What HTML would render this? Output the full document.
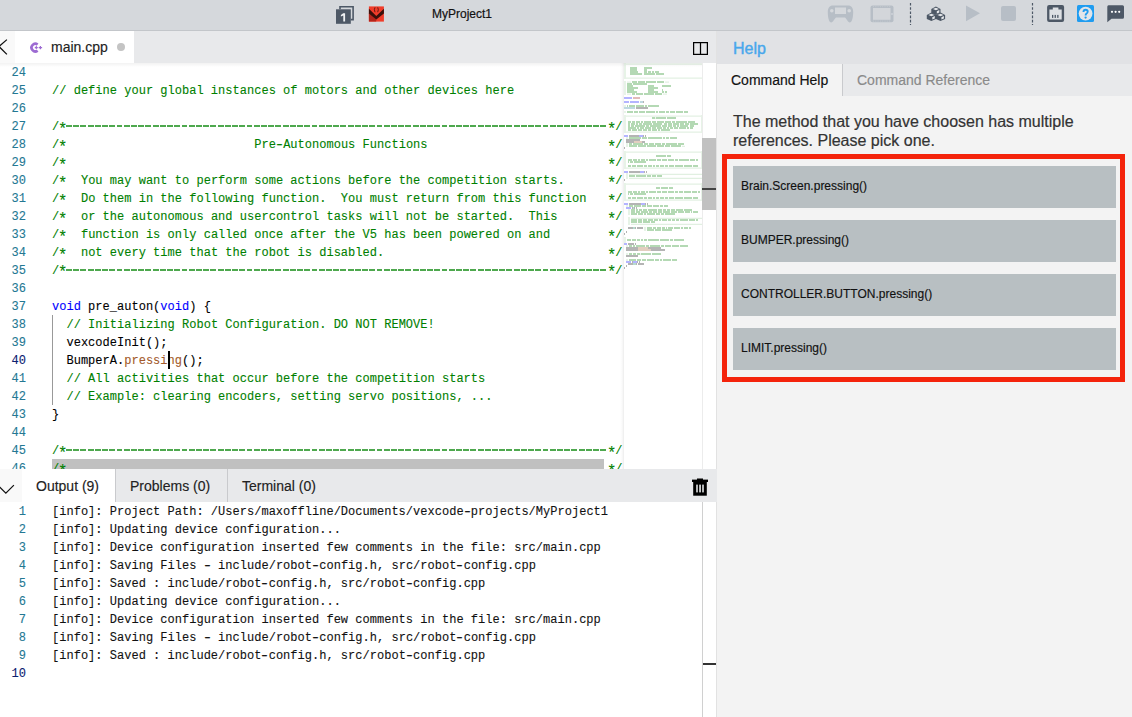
<!DOCTYPE html>
<html><head><meta charset="utf-8">
<style>
*{box-sizing:border-box}
html,body{margin:0;padding:0;width:1132px;height:717px;overflow:hidden;background:#fff;font-family:"Liberation Sans",sans-serif}
.abs{position:absolute}
#top{position:absolute;left:0;top:0;width:1132px;height:31px;background:#d5d8dc;border-bottom:1px solid #c3c6ca}
#title{position:absolute;left:432px;top:7px;font-size:12px;color:#111;letter-spacing:0;-webkit-text-stroke:0.2px #111}
#tabbar{position:absolute;left:0;top:31px;width:716px;height:32px;background:#e8e9eb}
#back{position:absolute;left:0;top:0;width:15px;height:32px;background:#f9f9f9}
#tab{position:absolute;left:15px;top:0;width:119px;height:32px;background:#fff}
#tab .t{position:absolute;left:36px;top:8px;font-size:14px;color:#222;-webkit-text-stroke:0.15px #222}
#tab .dot{position:absolute;left:102px;top:12px;width:8px;height:8px;border-radius:50%;background:#c4c4c4}
#editor{position:absolute;left:0;top:63px;width:716px;height:406px;background:#fff;overflow:hidden}
#edshadow{position:absolute;left:0;top:63px;width:702px;height:4px;background:linear-gradient(rgba(0,0,0,0.05),rgba(0,0,0,0));z-index:1}
.ln,.cl,.oln,.ocl{-webkit-text-stroke:0.1px currentColor;position:absolute;height:18px;line-height:18px;font-family:"Liberation Mono",monospace;font-size:12px;white-space:pre}
.ln{left:0;width:26px;text-align:right;color:#237893}
.ln.cur,.oln.cur{color:#0b216f}
.cl{left:52px;color:#000;letter-spacing:0.02px}
#ed-lines{position:absolute;left:0;top:-63px;width:716px;height:469px}
.ast{font-style:normal;display:inline-block;transform:translateY(2.6px) scale(1.3)}
.hy{font-style:normal;display:inline-block;transform:scaleX(1.45)}
.dash{position:absolute;height:1.6px;background:repeating-linear-gradient(to right,#4ea84e 0 5.9px,transparent 5.9px 7.2212px)}
.oln{left:0;width:26px;text-align:right;color:#237893}
.ocl{left:52px;color:#111;letter-spacing:0.02px}
#panelhdr{position:absolute;left:0;top:469px;width:717px;z-index:2;height:33px;background:#e8e9eb}
#collapse{position:absolute;left:0;top:0;width:22px;height:33px;background:#f9f9f9}
.ptab{position:absolute;top:0;height:33px;font-size:14px;color:#222;line-height:35px;-webkit-text-stroke:0.15px #222}
#output{position:absolute;left:0;top:502px;width:716px;height:215px;background:#fff;overflow:hidden}
#help{position:absolute;left:716px;top:31px;width:416px;height:686px;background:#f3f3f3;border-left:1px solid #e2e2e2}
#helphdr{position:absolute;left:0;top:0;width:415px;height:33px;background:#e1e2e5}
#helphdr .t{position:absolute;left:16px;top:9px;font-size:16px;color:#48a7ec;-webkit-text-stroke:0.4px #48a7ec}
#ctabs{position:absolute;left:0;top:33px;width:415px;height:32px}
.ctab{position:absolute;top:0;height:32px;line-height:32px;font-size:14px;-webkit-text-stroke:0.15px currentColor}
#msg{position:absolute;left:16px;top:81px;width:390px;font-size:16px;line-height:19px;color:#333;-webkit-text-stroke:0.2px #333}
#redbox{position:absolute;left:5px;top:123px;width:403px;height:228px;border:5px solid #f4230b}
.btn{position:absolute;left:6px;width:383px;height:42px;background:#b8bfc2;font-size:12px;color:#111;line-height:41px;padding-left:8px;-webkit-text-stroke:0.15px #111}
</style></head><body>
<div id="top">
  <svg class="abs" style="left:335px;top:5px" width="20" height="20" viewBox="0 0 20 20">
    <path d="M4.2 0.9 H18.9 V15.4 H15.8 V13.8 H17.3 V2.5 H5.8 V4.3 H4.2 Z" fill="#4d5866"/>
    <rect x="1" y="4.3" width="14.8" height="14.5" fill="#4d5866"/>
    <path d="M8.2 8.3 H10.1 V16.6 H8.3 V10.6 L5.9 11.6 V10 Z" fill="#f0f2f4"/>
  </svg>
  <svg class="abs" style="left:368px;top:6px" width="17" height="16" viewBox="0 0 17 16">
    <rect x="0.9" y="0.4" width="15" height="15.2" fill="#f03c2a"/>
    <path d="M0.9 6.9 L8.2 12.8 L8.2 15.6 L0.9 15.6 Z" fill="#b3241b"/>
    <path d="M0.9 2.7 L8.3 10.1 L15.9 2.7 V7.4 L8.3 13.6 L0.9 7.4 Z" fill="#3a0f0a"/>
    <path d="M7 1.4 Q5.7 3.6 7 6.2 M9.7 1.4 Q11 3.6 9.7 6.2" stroke="#5a140d" stroke-width="0.9" fill="none"/>
  </svg>
  <div id="title">MyProject1</div>
  <!-- controller -->
  <svg class="abs" style="left:827px;top:5px" width="27" height="18" viewBox="0 0 27 18">
    <path d="M6 0.5 H21 C24.5 0.5 26.2 3 26.2 7 C26.2 11 25.5 17 23 17.5 C21 17.8 19.5 13.5 18 12.5 H9 C7.5 13.5 6 17.8 4 17.5 C1.5 17 0.8 11 0.8 7 C0.8 3 2.5 0.5 6 0.5 Z" fill="#b7bec6"/>
    <rect x="8" y="2.5" width="11" height="6.5" fill="#d5d8dc"/>
    <circle cx="4.8" cy="5.8" r="1.8" fill="#d5d8dc"/>
    <circle cx="22.2" cy="5.8" r="1.8" fill="#d5d8dc"/>
  </svg>
  <!-- brain screen -->
  <svg class="abs" style="left:870px;top:5px" width="24" height="18" viewBox="0 0 24 18">
    <rect x="0.5" y="0.5" width="23" height="16.8" rx="2" fill="#b7bec6"/>
    <rect x="3" y="3" width="17.5" height="11.8" fill="#d3d6da"/>
    <circle cx="22" cy="9" r="0.8" fill="#e0e2e5"/>
    <path d="M3 1.7 H21 M3 16.1 H21" stroke="#cfd3d7" stroke-width="0.6" stroke-dasharray="1 1.3"/>
  </svg>
  <svg class="abs" style="left:909px;top:3px" width="3" height="22"><path d="M1.5 0 V22" stroke="#4d5866" stroke-width="1.2" stroke-dasharray="2.6 1.6"/></svg>
  <!-- cubes -->
  <svg class="abs" style="left:926px;top:6px" width="20" height="16" viewBox="0 0 20 16"><path d="M5.30 2.90 L9.90 0.60 L14.50 2.90 L14.50 6.90 L9.90 9.00 L5.30 6.90 Z" fill="#4d5866"/><path d="M6.90 2.90 L9.90 1.70 L12.90 2.90 L9.90 4.20 Z" fill="#e6e8eb"/><path d="M10.80 5.20 L13.30 4.10 L13.30 6.40 L10.80 7.60 Z" fill="#e6e8eb"/><path d="M0.80 8.90 L5.40 6.60 L10.00 8.90 L10.00 12.90 L5.40 15.00 L0.80 12.90 Z" fill="#4d5866"/><path d="M2.40 8.90 L5.40 7.70 L8.40 8.90 L5.40 10.20 Z" fill="#e6e8eb"/><path d="M6.30 11.20 L8.80 10.10 L8.80 12.40 L6.30 13.60 Z" fill="#e6e8eb"/><path d="M9.90 8.90 L14.50 6.60 L19.10 8.90 L19.10 12.90 L14.50 15.00 L9.90 12.90 Z" fill="#4d5866"/><path d="M11.50 8.90 L14.50 7.70 L17.50 8.90 L14.50 10.20 Z" fill="#e6e8eb"/><path d="M15.40 11.20 L17.90 10.10 L17.90 12.40 L15.40 13.60 Z" fill="#e6e8eb"/></svg>
  <!-- play -->
  <svg class="abs" style="left:965px;top:5px" width="16" height="17" viewBox="0 0 16 17"><path d="M1 0.5 L15 8.3 L1 16.3 Z" fill="#b7bec6"/></svg>
  <!-- stop -->
  <div class="abs" style="left:1001px;top:6px;width:15px;height:15px;border-radius:2px;background:#b7bec6"></div>
  <svg class="abs" style="left:1031px;top:3px" width="3" height="22"><path d="M1.5 0 V22" stroke="#4d5866" stroke-width="1.2" stroke-dasharray="2.6 1.6"/></svg>
  <!-- port/serial -->
  <svg class="abs" style="left:1047px;top:5px" width="18" height="17" viewBox="0 0 18 17">
    <rect x="0.1" y="0" width="17" height="17" rx="2" fill="#4d5866"/>
    <path d="M2.4 4.4 H5.8 V2.6 H11.4 V4.4 H14.7 V14.6 H2.4 Z" fill="#dde0e4"/>
    <rect x="5" y="9.9" width="1.3" height="3" fill="#4d5866"/>
    <rect x="7.6" y="9.9" width="1.3" height="3" fill="#4d5866"/>
    <rect x="10.2" y="9.9" width="1.3" height="3" fill="#4d5866"/>
  </svg>
  <!-- help -->
  <svg class="abs" style="left:1077px;top:5px" width="17" height="17" viewBox="0 0 17 17">
    <rect x="0" y="0" width="17" height="17" rx="1.5" fill="#1f9cf0"/>
    <circle cx="8.6" cy="8.6" r="6.9" fill="#e1e5ea"/>
    <path d="M6.5 7 Q6.5 4.7 8.6 4.7 Q10.7 4.7 10.7 6.6 Q10.7 7.9 9.6 8.5 Q8.6 9 8.6 10.5" stroke="#1f9cf0" stroke-width="1.9" fill="none"/>
    <circle cx="8.6" cy="12.6" r="1.15" fill="#1f9cf0"/>
  </svg>
  <!-- chat -->
  <svg class="abs" style="left:1107px;top:5px" width="17" height="18" viewBox="0 0 17 18">
    <path d="M1.5 0.2 H15.5 Q17 0.2 17 1.7 V12.2 Q17 13.7 15.5 13.7 H4.5 L0.3 17.2 V1.7 Q0.3 0.2 1.5 0.2 Z" fill="#4d5866"/>
    <circle cx="5" cy="6.8" r="1.1" fill="#fff"/><circle cx="8.6" cy="6.8" r="1.1" fill="#fff"/><circle cx="12.2" cy="6.8" r="1.1" fill="#fff"/>
  </svg>
</div>

<div id="tabbar">
  <div id="back"><svg class="abs" style="left:0;top:8px" width="10" height="17" viewBox="0 0 10 17"><path d="M6.9 0.6 L-1 7.5 L6.9 15.4" stroke="#111" stroke-width="1.25" fill="none"/></svg></div>
  <div id="tab">
    <svg class="abs" style="left:14px;top:10px" width="15" height="14" viewBox="0 0 15 14">
      <path d="M8.61 3.64 A3.75 3.75 0 1 0 8.61 9.56" stroke="#9d6bd2" stroke-width="2.7" fill="none"/>
      <path d="M5.8 6.6 H8.8 M7.3 5.1 V8.1" stroke="#9d6bd2" stroke-width="1.1"/>
      <path d="M9.7 6.6 H13.1 M11.4 4.9 V8.3" stroke="#9d6bd2" stroke-width="1.2"/>
    </svg>
    <div class="t">main.cpp</div>
    <div class="dot"></div>
  </div>
  <svg class="abs" style="left:693px;top:11px" width="15" height="13" viewBox="0 0 15 13"><rect x="0.6" y="0.6" width="13.8" height="11.8" fill="none" stroke="#000" stroke-width="1.25"/><path d="M7.5 0.6 V12.4" stroke="#000" stroke-width="1.25"/></svg>
</div>

<div id="editor"><div id="ed-lines">
  <div class="abs" style="left:52px;top:459px;width:552px;height:18px;background:#c0c0c0"></div>
  <div class="abs" style="left:52px;top:315px;width:1px;height:90px;background:#999"></div>
  <div class="ln" style="top:64px">24</div><div class="cl" style="top:64px"></div><div class="ln" style="top:82px">25</div><div class="cl" style="top:82px"><span style="color:#008000">// define your global instances of motors and other devices here</span></div><div class="ln" style="top:100px">26</div><div class="cl" style="top:100px"></div><div class="ln" style="top:118px">27</div><div class="cl" style="top:118px"><span style="color:#008000">/<i class="ast">*</i>                                                                           <i class="ast">*</i>/</span></div><div class="dash" style="left:66.44px;top:125px;width:541.59px"></div><div class="ln" style="top:136px">28</div><div class="cl" style="top:136px"><span style="color:#008000">/<i class="ast">*</i>                          Pre<i class="hy">-</i>Autonomous Functions                         <i class="ast">*</i>/</span></div><div class="ln" style="top:154px">29</div><div class="cl" style="top:154px"><span style="color:#008000">/<i class="ast">*</i>                                                                           <i class="ast">*</i>/</span></div><div class="ln" style="top:172px">30</div><div class="cl" style="top:172px"><span style="color:#008000">/<i class="ast">*</i>  You may want to perform some actions before the competition starts.      <i class="ast">*</i>/</span></div><div class="ln" style="top:190px">31</div><div class="cl" style="top:190px"><span style="color:#008000">/<i class="ast">*</i>  Do them in the following function.  You must return from this function   <i class="ast">*</i>/</span></div><div class="ln" style="top:208px">32</div><div class="cl" style="top:208px"><span style="color:#008000">/<i class="ast">*</i>  or the autonomous and usercontrol tasks will not be started.  This       <i class="ast">*</i>/</span></div><div class="ln" style="top:226px">33</div><div class="cl" style="top:226px"><span style="color:#008000">/<i class="ast">*</i>  function is only called once after the V5 has been powered on and        <i class="ast">*</i>/</span></div><div class="ln" style="top:244px">34</div><div class="cl" style="top:244px"><span style="color:#008000">/<i class="ast">*</i>  not every time that the robot is disabled.                               <i class="ast">*</i>/</span></div><div class="ln" style="top:262px">35</div><div class="cl" style="top:262px"><span style="color:#008000">/<i class="ast">*</i>                                                                           <i class="ast">*</i>/</span></div><div class="dash" style="left:66.44px;top:269px;width:541.59px"></div><div class="ln" style="top:280px">36</div><div class="cl" style="top:280px"></div><div class="ln" style="top:298px">37</div><div class="cl" style="top:298px"><span style="color:#0000ff">void</span> pre_auton(<span style="color:#0000ff">void</span>) {</div><div class="ln" style="top:316px">38</div><div class="cl" style="top:316px">  <span style="color:#008000">// Initializing Robot Configuration. DO NOT REMOVE!</span></div><div class="ln" style="top:334px">39</div><div class="cl" style="top:334px">  vexcodeInit();</div><div class="ln cur" style="top:352px">40</div><div class="cl" style="top:352px">  BumperA.<span style="color:#a35a2a">pressing</span>();</div><div class="ln" style="top:370px">41</div><div class="cl" style="top:370px">  <span style="color:#008000">// All activities that occur before the competition starts</span></div><div class="ln" style="top:388px">42</div><div class="cl" style="top:388px">  <span style="color:#008000">// Example: clearing encoders, setting servo positions, ...</span></div><div class="ln" style="top:406px">43</div><div class="cl" style="top:406px">}</div><div class="ln" style="top:424px">44</div><div class="cl" style="top:424px"></div><div class="ln" style="top:442px">45</div><div class="cl" style="top:442px"><span style="color:#008000">/<i class="ast">*</i>                                                                           <i class="ast">*</i>/</span></div><div class="dash" style="left:66.44px;top:449px;width:541.59px"></div><div class="ln" style="top:460px">46</div><div class="cl" style="top:460px"><span style="color:#008000">/<i class="ast">*</i>                                                                           <i class="ast">*</i>/</span></div>
  <div class="abs" style="left:168px;top:351px;width:2px;height:18px;background:#000"></div>
  <div class="abs" style="left:620px;top:63px;width:4px;height:406px;background:linear-gradient(to right,rgba(0,0,0,0),rgba(0,0,0,0.02) 50%,rgba(0,0,0,0.075))"></div>
  <svg width="78" height="210" style="position:absolute;left:624px;top:63px"><rect x="0" y="0.4" width="2" height="1.2" fill="#008000" fill-opacity="0.16"/><rect x="2" y="0.6" width="76" height="1" fill="#008000" fill-opacity="0.14"/><rect x="78" y="0.4" width="2" height="1.2" fill="#008000" fill-opacity="0.16"/><rect x="0" y="2.4" width="2" height="1.2" fill="#008000" fill-opacity="0.16"/><rect x="78" y="2.4" width="2" height="1.2" fill="#008000" fill-opacity="0.16"/><rect x="0" y="4.4" width="2" height="1.2" fill="#008000" fill-opacity="0.16"/><rect x="6" y="4.3" width="7" height="1.4" fill="#008000" fill-opacity="0.42"/><rect x="20" y="4.3" width="4" height="1.4" fill="#008000" fill-opacity="0.42"/><rect x="24" y="4.3" width="1" height="1.4" fill="#008000" fill-opacity="0.42"/><rect x="25" y="4.3" width="3" height="1.4" fill="#008000" fill-opacity="0.42"/><rect x="78" y="4.4" width="2" height="1.2" fill="#008000" fill-opacity="0.16"/><rect x="0" y="6.4" width="2" height="1.2" fill="#008000" fill-opacity="0.16"/><rect x="6" y="6.3" width="7" height="1.4" fill="#008000" fill-opacity="0.42"/><rect x="20" y="6.3" width="3" height="1.4" fill="#008000" fill-opacity="0.42"/><rect x="78" y="6.4" width="2" height="1.2" fill="#008000" fill-opacity="0.16"/><rect x="0" y="8.4" width="2" height="1.2" fill="#008000" fill-opacity="0.16"/><rect x="6" y="8.3" width="8" height="1.4" fill="#008000" fill-opacity="0.42"/><rect x="20" y="8.3" width="3" height="1.4" fill="#008000" fill-opacity="0.42"/><rect x="24" y="8.3" width="3" height="1.4" fill="#008000" fill-opacity="0.42"/><rect x="28" y="8.3" width="2" height="1.4" fill="#008000" fill-opacity="0.42"/><rect x="31" y="8.3" width="4" height="1.4" fill="#008000" fill-opacity="0.42"/><rect x="78" y="8.4" width="2" height="1.2" fill="#008000" fill-opacity="0.16"/><rect x="0" y="10.4" width="2" height="1.2" fill="#008000" fill-opacity="0.16"/><rect x="6" y="10.3" width="12" height="1.4" fill="#008000" fill-opacity="0.42"/><rect x="20" y="10.3" width="11" height="1.4" fill="#008000" fill-opacity="0.42"/><rect x="32" y="10.3" width="8" height="1.4" fill="#008000" fill-opacity="0.42"/><rect x="78" y="10.4" width="2" height="1.2" fill="#008000" fill-opacity="0.16"/><rect x="0" y="12.4" width="2" height="1.2" fill="#008000" fill-opacity="0.16"/><rect x="78" y="12.4" width="2" height="1.2" fill="#008000" fill-opacity="0.16"/><rect x="0" y="14.4" width="2" height="1.2" fill="#008000" fill-opacity="0.16"/><rect x="2" y="14.6" width="76" height="1" fill="#008000" fill-opacity="0.14"/><rect x="78" y="14.4" width="2" height="1.2" fill="#008000" fill-opacity="0.16"/><rect x="0" y="18.4" width="2" height="1.2" fill="#008000" fill-opacity="0.16"/><rect x="3" y="18.6" width="4" height="1" fill="#008000" fill-opacity="0.14"/><rect x="8" y="18.3" width="5" height="1.4" fill="#008000" fill-opacity="0.42"/><rect x="14" y="18.3" width="7" height="1.4" fill="#008000" fill-opacity="0.42"/><rect x="22" y="18.3" width="10" height="1.4" fill="#008000" fill-opacity="0.42"/><rect x="33" y="18.3" width="7" height="1.4" fill="#008000" fill-opacity="0.42"/><rect x="41" y="18.6" width="4" height="1" fill="#008000" fill-opacity="0.14"/><rect x="0" y="20.4" width="2" height="1.2" fill="#008000" fill-opacity="0.16"/><rect x="3" y="20.3" width="5" height="1.4" fill="#008000" fill-opacity="0.42"/><rect x="9" y="20.3" width="14" height="1.4" fill="#008000" fill-opacity="0.42"/><rect x="0" y="22.4" width="2" height="1.2" fill="#008000" fill-opacity="0.16"/><rect x="3" y="22.3" width="6" height="1.4" fill="#008000" fill-opacity="0.42"/><rect x="24" y="22.3" width="6" height="1.4" fill="#008000" fill-opacity="0.42"/><rect x="38" y="22.3" width="9" height="1.4" fill="#008000" fill-opacity="0.42"/><rect x="0" y="24.4" width="2" height="1.2" fill="#008000" fill-opacity="0.16"/><rect x="3" y="24.3" width="11" height="1.4" fill="#008000" fill-opacity="0.42"/><rect x="24" y="24.3" width="10" height="1.4" fill="#008000" fill-opacity="0.42"/><rect x="0" y="26.4" width="2" height="1.2" fill="#008000" fill-opacity="0.16"/><rect x="3" y="26.3" width="7" height="1.4" fill="#008000" fill-opacity="0.42"/><rect x="24" y="26.3" width="6" height="1.4" fill="#008000" fill-opacity="0.42"/><rect x="38" y="26.3" width="1" height="1.4" fill="#008000" fill-opacity="0.42"/><rect x="0" y="28.4" width="2" height="1.2" fill="#008000" fill-opacity="0.16"/><rect x="3" y="28.3" width="10" height="1.4" fill="#008000" fill-opacity="0.42"/><rect x="24" y="28.3" width="10" height="1.4" fill="#008000" fill-opacity="0.42"/><rect x="38" y="28.3" width="2" height="1.4" fill="#008000" fill-opacity="0.42"/><rect x="41" y="28.3" width="2" height="1.4" fill="#008000" fill-opacity="0.42"/><rect x="0" y="30.4" width="2" height="1.2" fill="#008000" fill-opacity="0.16"/><rect x="3" y="30.6" width="4" height="1" fill="#008000" fill-opacity="0.14"/><rect x="8" y="30.3" width="3" height="1.4" fill="#008000" fill-opacity="0.42"/><rect x="12" y="30.3" width="7" height="1.4" fill="#008000" fill-opacity="0.42"/><rect x="20" y="30.3" width="10" height="1.4" fill="#008000" fill-opacity="0.42"/><rect x="31" y="30.3" width="7" height="1.4" fill="#008000" fill-opacity="0.42"/><rect x="39" y="30.6" width="4" height="1" fill="#008000" fill-opacity="0.14"/><rect x="0" y="34.3" width="8" height="1.4" fill="#0000ff" fill-opacity="0.42"/><rect x="9" y="34.3" width="4" height="1.4" fill="#a31515" fill-opacity="0.42"/><rect x="13" y="34.3" width="1" height="1.4" fill="#a31515" fill-opacity="0.42"/><rect x="14" y="34.3" width="2" height="1.4" fill="#a31515" fill-opacity="0.42"/><rect x="0" y="38.3" width="5" height="1.4" fill="#0000ff" fill-opacity="0.42"/><rect x="6" y="38.3" width="9" height="1.4" fill="#0000ff" fill-opacity="0.42"/><rect x="16" y="38.3" width="3" height="1.4" fill="#267f99" fill-opacity="0.42"/><rect x="19" y="38.3" width="1" height="1.4" fill="#000000" fill-opacity="0.42"/><rect x="0" y="42.4" width="2" height="1.2" fill="#008000" fill-opacity="0.16"/><rect x="3" y="42.3" width="1" height="1.4" fill="#008000" fill-opacity="0.42"/><rect x="5" y="42.3" width="6" height="1.4" fill="#008000" fill-opacity="0.42"/><rect x="12" y="42.3" width="8" height="1.4" fill="#008000" fill-opacity="0.42"/><rect x="21" y="42.3" width="2" height="1.4" fill="#008000" fill-opacity="0.42"/><rect x="24" y="42.3" width="11" height="1.4" fill="#008000" fill-opacity="0.42"/><rect x="0" y="44.3" width="11" height="1.4" fill="#267f99" fill-opacity="0.42"/><rect x="12" y="44.3" width="11" height="1.4" fill="#000000" fill-opacity="0.42"/><rect x="23" y="44.3" width="1" height="1.4" fill="#000000" fill-opacity="0.42"/><rect x="0" y="48.4" width="2" height="1.2" fill="#008000" fill-opacity="0.16"/><rect x="3" y="48.3" width="6" height="1.4" fill="#008000" fill-opacity="0.42"/><rect x="10" y="48.3" width="4" height="1.4" fill="#008000" fill-opacity="0.42"/><rect x="15" y="48.3" width="6" height="1.4" fill="#008000" fill-opacity="0.42"/><rect x="22" y="48.3" width="9" height="1.4" fill="#008000" fill-opacity="0.42"/><rect x="32" y="48.3" width="2" height="1.4" fill="#008000" fill-opacity="0.42"/><rect x="35" y="48.3" width="6" height="1.4" fill="#008000" fill-opacity="0.42"/><rect x="42" y="48.3" width="3" height="1.4" fill="#008000" fill-opacity="0.42"/><rect x="46" y="48.3" width="5" height="1.4" fill="#008000" fill-opacity="0.42"/><rect x="52" y="48.3" width="7" height="1.4" fill="#008000" fill-opacity="0.42"/><rect x="60" y="48.3" width="4" height="1.4" fill="#008000" fill-opacity="0.42"/><rect x="0" y="52.4" width="2" height="1.2" fill="#008000" fill-opacity="0.16"/><rect x="2" y="52.6" width="75" height="1" fill="#008000" fill-opacity="0.14"/><rect x="77" y="52.4" width="2" height="1.2" fill="#008000" fill-opacity="0.16"/><rect x="0" y="54.4" width="2" height="1.2" fill="#008000" fill-opacity="0.16"/><rect x="28" y="54.3" width="3" height="1.4" fill="#008000" fill-opacity="0.42"/><rect x="31" y="54.6" width="1" height="1" fill="#008000" fill-opacity="0.14"/><rect x="32" y="54.3" width="10" height="1.4" fill="#008000" fill-opacity="0.42"/><rect x="43" y="54.3" width="9" height="1.4" fill="#008000" fill-opacity="0.42"/><rect x="77" y="54.4" width="2" height="1.2" fill="#008000" fill-opacity="0.16"/><rect x="0" y="56.4" width="2" height="1.2" fill="#008000" fill-opacity="0.16"/><rect x="77" y="56.4" width="2" height="1.2" fill="#008000" fill-opacity="0.16"/><rect x="0" y="58.4" width="2" height="1.2" fill="#008000" fill-opacity="0.16"/><rect x="4" y="58.3" width="3" height="1.4" fill="#008000" fill-opacity="0.42"/><rect x="8" y="58.3" width="3" height="1.4" fill="#008000" fill-opacity="0.42"/><rect x="12" y="58.3" width="4" height="1.4" fill="#008000" fill-opacity="0.42"/><rect x="17" y="58.3" width="2" height="1.4" fill="#008000" fill-opacity="0.42"/><rect x="20" y="58.3" width="7" height="1.4" fill="#008000" fill-opacity="0.42"/><rect x="28" y="58.3" width="4" height="1.4" fill="#008000" fill-opacity="0.42"/><rect x="33" y="58.3" width="7" height="1.4" fill="#008000" fill-opacity="0.42"/><rect x="41" y="58.3" width="6" height="1.4" fill="#008000" fill-opacity="0.42"/><rect x="48" y="58.3" width="3" height="1.4" fill="#008000" fill-opacity="0.42"/><rect x="52" y="58.3" width="11" height="1.4" fill="#008000" fill-opacity="0.42"/><rect x="64" y="58.3" width="6" height="1.4" fill="#008000" fill-opacity="0.42"/><rect x="70" y="58.3" width="1" height="1.4" fill="#008000" fill-opacity="0.42"/><rect x="77" y="58.4" width="2" height="1.2" fill="#008000" fill-opacity="0.16"/><rect x="0" y="60.4" width="2" height="1.2" fill="#008000" fill-opacity="0.16"/><rect x="4" y="60.3" width="2" height="1.4" fill="#008000" fill-opacity="0.42"/><rect x="7" y="60.3" width="4" height="1.4" fill="#008000" fill-opacity="0.42"/><rect x="12" y="60.3" width="2" height="1.4" fill="#008000" fill-opacity="0.42"/><rect x="15" y="60.3" width="3" height="1.4" fill="#008000" fill-opacity="0.42"/><rect x="19" y="60.3" width="9" height="1.4" fill="#008000" fill-opacity="0.42"/><rect x="29" y="60.3" width="8" height="1.4" fill="#008000" fill-opacity="0.42"/><rect x="37" y="60.3" width="1" height="1.4" fill="#008000" fill-opacity="0.42"/><rect x="40" y="60.3" width="3" height="1.4" fill="#008000" fill-opacity="0.42"/><rect x="44" y="60.3" width="4" height="1.4" fill="#008000" fill-opacity="0.42"/><rect x="49" y="60.3" width="6" height="1.4" fill="#008000" fill-opacity="0.42"/><rect x="56" y="60.3" width="4" height="1.4" fill="#008000" fill-opacity="0.42"/><rect x="61" y="60.3" width="4" height="1.4" fill="#008000" fill-opacity="0.42"/><rect x="66" y="60.3" width="8" height="1.4" fill="#008000" fill-opacity="0.42"/><rect x="77" y="60.4" width="2" height="1.2" fill="#008000" fill-opacity="0.16"/><rect x="0" y="62.4" width="2" height="1.2" fill="#008000" fill-opacity="0.16"/><rect x="4" y="62.3" width="2" height="1.4" fill="#008000" fill-opacity="0.42"/><rect x="7" y="62.3" width="3" height="1.4" fill="#008000" fill-opacity="0.42"/><rect x="11" y="62.3" width="10" height="1.4" fill="#008000" fill-opacity="0.42"/><rect x="22" y="62.3" width="3" height="1.4" fill="#008000" fill-opacity="0.42"/><rect x="26" y="62.3" width="11" height="1.4" fill="#008000" fill-opacity="0.42"/><rect x="38" y="62.3" width="5" height="1.4" fill="#008000" fill-opacity="0.42"/><rect x="44" y="62.3" width="4" height="1.4" fill="#008000" fill-opacity="0.42"/><rect x="49" y="62.3" width="3" height="1.4" fill="#008000" fill-opacity="0.42"/><rect x="53" y="62.3" width="2" height="1.4" fill="#008000" fill-opacity="0.42"/><rect x="56" y="62.3" width="7" height="1.4" fill="#008000" fill-opacity="0.42"/><rect x="63" y="62.3" width="1" height="1.4" fill="#008000" fill-opacity="0.42"/><rect x="66" y="62.3" width="4" height="1.4" fill="#008000" fill-opacity="0.42"/><rect x="77" y="62.4" width="2" height="1.2" fill="#008000" fill-opacity="0.16"/><rect x="0" y="64.4" width="2" height="1.2" fill="#008000" fill-opacity="0.16"/><rect x="4" y="64.3" width="8" height="1.4" fill="#008000" fill-opacity="0.42"/><rect x="13" y="64.3" width="2" height="1.4" fill="#008000" fill-opacity="0.42"/><rect x="16" y="64.3" width="4" height="1.4" fill="#008000" fill-opacity="0.42"/><rect x="21" y="64.3" width="6" height="1.4" fill="#008000" fill-opacity="0.42"/><rect x="28" y="64.3" width="4" height="1.4" fill="#008000" fill-opacity="0.42"/><rect x="33" y="64.3" width="5" height="1.4" fill="#008000" fill-opacity="0.42"/><rect x="39" y="64.3" width="3" height="1.4" fill="#008000" fill-opacity="0.42"/><rect x="43" y="64.3" width="2" height="1.4" fill="#008000" fill-opacity="0.42"/><rect x="46" y="64.3" width="3" height="1.4" fill="#008000" fill-opacity="0.42"/><rect x="50" y="64.3" width="4" height="1.4" fill="#008000" fill-opacity="0.42"/><rect x="55" y="64.3" width="7" height="1.4" fill="#008000" fill-opacity="0.42"/><rect x="63" y="64.3" width="2" height="1.4" fill="#008000" fill-opacity="0.42"/><rect x="66" y="64.3" width="3" height="1.4" fill="#008000" fill-opacity="0.42"/><rect x="77" y="64.4" width="2" height="1.2" fill="#008000" fill-opacity="0.16"/><rect x="0" y="66.4" width="2" height="1.2" fill="#008000" fill-opacity="0.16"/><rect x="4" y="66.3" width="3" height="1.4" fill="#008000" fill-opacity="0.42"/><rect x="8" y="66.3" width="5" height="1.4" fill="#008000" fill-opacity="0.42"/><rect x="14" y="66.3" width="4" height="1.4" fill="#008000" fill-opacity="0.42"/><rect x="19" y="66.3" width="4" height="1.4" fill="#008000" fill-opacity="0.42"/><rect x="24" y="66.3" width="3" height="1.4" fill="#008000" fill-opacity="0.42"/><rect x="28" y="66.3" width="5" height="1.4" fill="#008000" fill-opacity="0.42"/><rect x="34" y="66.3" width="2" height="1.4" fill="#008000" fill-opacity="0.42"/><rect x="37" y="66.3" width="8" height="1.4" fill="#008000" fill-opacity="0.42"/><rect x="45" y="66.3" width="1" height="1.4" fill="#008000" fill-opacity="0.42"/><rect x="77" y="66.4" width="2" height="1.2" fill="#008000" fill-opacity="0.16"/><rect x="0" y="68.4" width="2" height="1.2" fill="#008000" fill-opacity="0.16"/><rect x="2" y="68.6" width="75" height="1" fill="#008000" fill-opacity="0.14"/><rect x="77" y="68.4" width="2" height="1.2" fill="#008000" fill-opacity="0.16"/><rect x="0" y="72.3" width="4" height="1.4" fill="#0000ff" fill-opacity="0.42"/><rect x="5" y="72.3" width="9" height="1.4" fill="#000000" fill-opacity="0.42"/><rect x="14" y="72.3" width="1" height="1.4" fill="#000000" fill-opacity="0.42"/><rect x="15" y="72.3" width="4" height="1.4" fill="#0000ff" fill-opacity="0.42"/><rect x="19" y="72.3" width="1" height="1.4" fill="#000000" fill-opacity="0.42"/><rect x="21" y="72.3" width="1" height="1.4" fill="#000000" fill-opacity="0.42"/><rect x="2" y="74.4" width="2" height="1.2" fill="#008000" fill-opacity="0.16"/><rect x="5" y="74.3" width="12" height="1.4" fill="#008000" fill-opacity="0.42"/><rect x="18" y="74.3" width="5" height="1.4" fill="#008000" fill-opacity="0.42"/><rect x="24" y="74.3" width="13" height="1.4" fill="#008000" fill-opacity="0.42"/><rect x="37" y="74.3" width="1" height="1.4" fill="#008000" fill-opacity="0.42"/><rect x="39" y="74.3" width="2" height="1.4" fill="#008000" fill-opacity="0.42"/><rect x="42" y="74.3" width="3" height="1.4" fill="#008000" fill-opacity="0.42"/><rect x="46" y="74.3" width="7" height="1.4" fill="#008000" fill-opacity="0.42"/><rect x="2" y="76.3" width="11" height="1.4" fill="#000000" fill-opacity="0.42"/><rect x="13" y="76.3" width="1" height="1.4" fill="#000000" fill-opacity="0.42"/><rect x="14" y="76.3" width="1" height="1.4" fill="#000000" fill-opacity="0.42"/><rect x="15" y="76.3" width="1" height="1.4" fill="#000000" fill-opacity="0.42"/><rect x="2" y="78.3" width="7" height="1.4" fill="#000000" fill-opacity="0.42"/><rect x="9" y="78.3" width="1" height="1.4" fill="#000000" fill-opacity="0.42"/><rect x="10" y="78.3" width="8" height="1.4" fill="#a35a2a" fill-opacity="0.42"/><rect x="18" y="78.3" width="1" height="1.4" fill="#000000" fill-opacity="0.42"/><rect x="19" y="78.3" width="1" height="1.4" fill="#000000" fill-opacity="0.42"/><rect x="20" y="78.3" width="1" height="1.4" fill="#000000" fill-opacity="0.42"/><rect x="2" y="80.4" width="2" height="1.2" fill="#008000" fill-opacity="0.16"/><rect x="5" y="80.3" width="3" height="1.4" fill="#008000" fill-opacity="0.42"/><rect x="9" y="80.3" width="10" height="1.4" fill="#008000" fill-opacity="0.42"/><rect x="20" y="80.3" width="4" height="1.4" fill="#008000" fill-opacity="0.42"/><rect x="25" y="80.3" width="5" height="1.4" fill="#008000" fill-opacity="0.42"/><rect x="31" y="80.3" width="6" height="1.4" fill="#008000" fill-opacity="0.42"/><rect x="38" y="80.3" width="3" height="1.4" fill="#008000" fill-opacity="0.42"/><rect x="42" y="80.3" width="11" height="1.4" fill="#008000" fill-opacity="0.42"/><rect x="54" y="80.3" width="6" height="1.4" fill="#008000" fill-opacity="0.42"/><rect x="2" y="82.4" width="2" height="1.2" fill="#008000" fill-opacity="0.16"/><rect x="5" y="82.3" width="8" height="1.4" fill="#008000" fill-opacity="0.42"/><rect x="14" y="82.3" width="8" height="1.4" fill="#008000" fill-opacity="0.42"/><rect x="23" y="82.3" width="9" height="1.4" fill="#008000" fill-opacity="0.42"/><rect x="33" y="82.3" width="7" height="1.4" fill="#008000" fill-opacity="0.42"/><rect x="41" y="82.3" width="5" height="1.4" fill="#008000" fill-opacity="0.42"/><rect x="47" y="82.3" width="10" height="1.4" fill="#008000" fill-opacity="0.42"/><rect x="58" y="82.8" width="3" height="1" fill="#008000" fill-opacity="0.15"/><rect x="0" y="84.3" width="1" height="1.4" fill="#000000" fill-opacity="0.42"/><rect x="0" y="88.4" width="2" height="1.2" fill="#008000" fill-opacity="0.16"/><rect x="2" y="88.6" width="75" height="1" fill="#008000" fill-opacity="0.14"/><rect x="77" y="88.4" width="2" height="1.2" fill="#008000" fill-opacity="0.16"/><rect x="0" y="90.4" width="2" height="1.2" fill="#008000" fill-opacity="0.16"/><rect x="77" y="90.4" width="2" height="1.2" fill="#008000" fill-opacity="0.16"/><rect x="0" y="92.4" width="2" height="1.2" fill="#008000" fill-opacity="0.16"/><rect x="32" y="92.3" width="10" height="1.4" fill="#008000" fill-opacity="0.42"/><rect x="43" y="92.3" width="4" height="1.4" fill="#008000" fill-opacity="0.42"/><rect x="77" y="92.4" width="2" height="1.2" fill="#008000" fill-opacity="0.16"/><rect x="0" y="94.4" width="2" height="1.2" fill="#008000" fill-opacity="0.16"/><rect x="77" y="94.4" width="2" height="1.2" fill="#008000" fill-opacity="0.16"/><rect x="0" y="96.4" width="2" height="1.2" fill="#008000" fill-opacity="0.16"/><rect x="4" y="96.3" width="4" height="1.4" fill="#008000" fill-opacity="0.42"/><rect x="9" y="96.3" width="4" height="1.4" fill="#008000" fill-opacity="0.42"/><rect x="14" y="96.3" width="2" height="1.4" fill="#008000" fill-opacity="0.42"/><rect x="17" y="96.3" width="4" height="1.4" fill="#008000" fill-opacity="0.42"/><rect x="22" y="96.3" width="2" height="1.4" fill="#008000" fill-opacity="0.42"/><rect x="25" y="96.3" width="7" height="1.4" fill="#008000" fill-opacity="0.42"/><rect x="33" y="96.3" width="4" height="1.4" fill="#008000" fill-opacity="0.42"/><rect x="38" y="96.3" width="5" height="1.4" fill="#008000" fill-opacity="0.42"/><rect x="44" y="96.3" width="6" height="1.4" fill="#008000" fill-opacity="0.42"/><rect x="51" y="96.3" width="3" height="1.4" fill="#008000" fill-opacity="0.42"/><rect x="55" y="96.3" width="10" height="1.4" fill="#008000" fill-opacity="0.42"/><rect x="66" y="96.3" width="5" height="1.4" fill="#008000" fill-opacity="0.42"/><rect x="72" y="96.3" width="2" height="1.4" fill="#008000" fill-opacity="0.42"/><rect x="77" y="96.4" width="2" height="1.2" fill="#008000" fill-opacity="0.16"/><rect x="0" y="98.4" width="2" height="1.2" fill="#008000" fill-opacity="0.16"/><rect x="4" y="98.3" width="1" height="1.4" fill="#008000" fill-opacity="0.42"/><rect x="6" y="98.3" width="3" height="1.4" fill="#008000" fill-opacity="0.42"/><rect x="10" y="98.3" width="11" height="1.4" fill="#008000" fill-opacity="0.42"/><rect x="21" y="98.3" width="1" height="1.4" fill="#008000" fill-opacity="0.42"/><rect x="77" y="98.4" width="2" height="1.2" fill="#008000" fill-opacity="0.16"/><rect x="0" y="100.4" width="2" height="1.2" fill="#008000" fill-opacity="0.16"/><rect x="77" y="100.4" width="2" height="1.2" fill="#008000" fill-opacity="0.16"/><rect x="0" y="102.4" width="2" height="1.2" fill="#008000" fill-opacity="0.16"/><rect x="4" y="102.3" width="3" height="1.4" fill="#008000" fill-opacity="0.42"/><rect x="8" y="102.3" width="4" height="1.4" fill="#008000" fill-opacity="0.42"/><rect x="13" y="102.3" width="6" height="1.4" fill="#008000" fill-opacity="0.42"/><rect x="20" y="102.3" width="3" height="1.4" fill="#008000" fill-opacity="0.42"/><rect x="24" y="102.3" width="4" height="1.4" fill="#008000" fill-opacity="0.42"/><rect x="29" y="102.3" width="2" height="1.4" fill="#008000" fill-opacity="0.42"/><rect x="32" y="102.3" width="3" height="1.4" fill="#008000" fill-opacity="0.42"/><rect x="36" y="102.3" width="4" height="1.4" fill="#008000" fill-opacity="0.42"/><rect x="41" y="102.3" width="3" height="1.4" fill="#008000" fill-opacity="0.42"/><rect x="45" y="102.3" width="5" height="1.4" fill="#008000" fill-opacity="0.42"/><rect x="51" y="102.3" width="8" height="1.4" fill="#008000" fill-opacity="0.42"/><rect x="60" y="102.3" width="8" height="1.4" fill="#008000" fill-opacity="0.42"/><rect x="69" y="102.3" width="4" height="1.4" fill="#008000" fill-opacity="0.42"/><rect x="73" y="102.3" width="1" height="1.4" fill="#008000" fill-opacity="0.42"/><rect x="77" y="102.4" width="2" height="1.2" fill="#008000" fill-opacity="0.16"/><rect x="0" y="104.4" width="2" height="1.2" fill="#008000" fill-opacity="0.16"/><rect x="2" y="104.6" width="75" height="1" fill="#008000" fill-opacity="0.14"/><rect x="77" y="104.4" width="2" height="1.2" fill="#008000" fill-opacity="0.16"/><rect x="0" y="108.3" width="4" height="1.4" fill="#0000ff" fill-opacity="0.42"/><rect x="5" y="108.3" width="10" height="1.4" fill="#000000" fill-opacity="0.42"/><rect x="15" y="108.3" width="1" height="1.4" fill="#000000" fill-opacity="0.42"/><rect x="16" y="108.3" width="4" height="1.4" fill="#0000ff" fill-opacity="0.42"/><rect x="20" y="108.3" width="1" height="1.4" fill="#000000" fill-opacity="0.42"/><rect x="22" y="108.3" width="1" height="1.4" fill="#000000" fill-opacity="0.42"/><rect x="2" y="110.4" width="2" height="1.2" fill="#008000" fill-opacity="0.16"/><rect x="5" y="110.8" width="74" height="1" fill="#008000" fill-opacity="0.15"/><rect x="2" y="112.4" width="2" height="1.2" fill="#008000" fill-opacity="0.16"/><rect x="5" y="112.3" width="6" height="1.4" fill="#008000" fill-opacity="0.42"/><rect x="12" y="112.3" width="10" height="1.4" fill="#008000" fill-opacity="0.42"/><rect x="23" y="112.3" width="4" height="1.4" fill="#008000" fill-opacity="0.42"/><rect x="28" y="112.3" width="4" height="1.4" fill="#008000" fill-opacity="0.42"/><rect x="33" y="112.3" width="4" height="1.4" fill="#008000" fill-opacity="0.42"/><rect x="37" y="112.3" width="1" height="1.4" fill="#008000" fill-opacity="0.42"/><rect x="2" y="114.4" width="2" height="1.2" fill="#008000" fill-opacity="0.16"/><rect x="5" y="114.8" width="74" height="1" fill="#008000" fill-opacity="0.15"/><rect x="0" y="116.3" width="1" height="1.4" fill="#000000" fill-opacity="0.42"/><rect x="0" y="120.4" width="2" height="1.2" fill="#008000" fill-opacity="0.16"/><rect x="2" y="120.6" width="75" height="1" fill="#008000" fill-opacity="0.14"/><rect x="77" y="120.4" width="2" height="1.2" fill="#008000" fill-opacity="0.16"/><rect x="0" y="122.4" width="2" height="1.2" fill="#008000" fill-opacity="0.16"/><rect x="77" y="122.4" width="2" height="1.2" fill="#008000" fill-opacity="0.16"/><rect x="0" y="124.4" width="2" height="1.2" fill="#008000" fill-opacity="0.16"/><rect x="32" y="124.3" width="4" height="1.4" fill="#008000" fill-opacity="0.42"/><rect x="37" y="124.3" width="7" height="1.4" fill="#008000" fill-opacity="0.42"/><rect x="45" y="124.3" width="4" height="1.4" fill="#008000" fill-opacity="0.42"/><rect x="77" y="124.4" width="2" height="1.2" fill="#008000" fill-opacity="0.16"/><rect x="0" y="126.4" width="2" height="1.2" fill="#008000" fill-opacity="0.16"/><rect x="77" y="126.4" width="2" height="1.2" fill="#008000" fill-opacity="0.16"/><rect x="0" y="128.4" width="2" height="1.2" fill="#008000" fill-opacity="0.16"/><rect x="4" y="128.3" width="4" height="1.4" fill="#008000" fill-opacity="0.42"/><rect x="9" y="128.3" width="4" height="1.4" fill="#008000" fill-opacity="0.42"/><rect x="14" y="128.3" width="2" height="1.4" fill="#008000" fill-opacity="0.42"/><rect x="17" y="128.3" width="4" height="1.4" fill="#008000" fill-opacity="0.42"/><rect x="22" y="128.3" width="2" height="1.4" fill="#008000" fill-opacity="0.42"/><rect x="25" y="128.3" width="7" height="1.4" fill="#008000" fill-opacity="0.42"/><rect x="33" y="128.3" width="4" height="1.4" fill="#008000" fill-opacity="0.42"/><rect x="38" y="128.3" width="5" height="1.4" fill="#008000" fill-opacity="0.42"/><rect x="44" y="128.3" width="6" height="1.4" fill="#008000" fill-opacity="0.42"/><rect x="51" y="128.3" width="3" height="1.4" fill="#008000" fill-opacity="0.42"/><rect x="55" y="128.3" width="4" height="1.4" fill="#008000" fill-opacity="0.42"/><rect x="60" y="128.3" width="7" height="1.4" fill="#008000" fill-opacity="0.42"/><rect x="68" y="128.3" width="5" height="1.4" fill="#008000" fill-opacity="0.42"/><rect x="74" y="128.3" width="2" height="1.4" fill="#008000" fill-opacity="0.42"/><rect x="77" y="128.4" width="2" height="1.2" fill="#008000" fill-opacity="0.16"/><rect x="0" y="130.4" width="2" height="1.2" fill="#008000" fill-opacity="0.16"/><rect x="4" y="130.3" width="1" height="1.4" fill="#008000" fill-opacity="0.42"/><rect x="6" y="130.3" width="3" height="1.4" fill="#008000" fill-opacity="0.42"/><rect x="10" y="130.3" width="11" height="1.4" fill="#008000" fill-opacity="0.42"/><rect x="21" y="130.3" width="1" height="1.4" fill="#008000" fill-opacity="0.42"/><rect x="77" y="130.4" width="2" height="1.2" fill="#008000" fill-opacity="0.16"/><rect x="0" y="132.4" width="2" height="1.2" fill="#008000" fill-opacity="0.16"/><rect x="77" y="132.4" width="2" height="1.2" fill="#008000" fill-opacity="0.16"/><rect x="0" y="134.4" width="2" height="1.2" fill="#008000" fill-opacity="0.16"/><rect x="4" y="134.3" width="3" height="1.4" fill="#008000" fill-opacity="0.42"/><rect x="8" y="134.3" width="4" height="1.4" fill="#008000" fill-opacity="0.42"/><rect x="13" y="134.3" width="6" height="1.4" fill="#008000" fill-opacity="0.42"/><rect x="20" y="134.3" width="3" height="1.4" fill="#008000" fill-opacity="0.42"/><rect x="24" y="134.3" width="4" height="1.4" fill="#008000" fill-opacity="0.42"/><rect x="29" y="134.3" width="2" height="1.4" fill="#008000" fill-opacity="0.42"/><rect x="32" y="134.3" width="3" height="1.4" fill="#008000" fill-opacity="0.42"/><rect x="36" y="134.3" width="4" height="1.4" fill="#008000" fill-opacity="0.42"/><rect x="41" y="134.3" width="3" height="1.4" fill="#008000" fill-opacity="0.42"/><rect x="45" y="134.3" width="5" height="1.4" fill="#008000" fill-opacity="0.42"/><rect x="51" y="134.3" width="8" height="1.4" fill="#008000" fill-opacity="0.42"/><rect x="60" y="134.3" width="8" height="1.4" fill="#008000" fill-opacity="0.42"/><rect x="69" y="134.3" width="4" height="1.4" fill="#008000" fill-opacity="0.42"/><rect x="73" y="134.3" width="1" height="1.4" fill="#008000" fill-opacity="0.42"/><rect x="77" y="134.4" width="2" height="1.2" fill="#008000" fill-opacity="0.16"/><rect x="0" y="136.4" width="2" height="1.2" fill="#008000" fill-opacity="0.16"/><rect x="2" y="136.6" width="75" height="1" fill="#008000" fill-opacity="0.14"/><rect x="77" y="136.4" width="2" height="1.2" fill="#008000" fill-opacity="0.16"/><rect x="0" y="140.3" width="4" height="1.4" fill="#0000ff" fill-opacity="0.42"/><rect x="5" y="140.3" width="11" height="1.4" fill="#000000" fill-opacity="0.42"/><rect x="16" y="140.3" width="1" height="1.4" fill="#000000" fill-opacity="0.42"/><rect x="17" y="140.3" width="4" height="1.4" fill="#0000ff" fill-opacity="0.42"/><rect x="21" y="140.3" width="1" height="1.4" fill="#000000" fill-opacity="0.42"/><rect x="23" y="140.3" width="1" height="1.4" fill="#000000" fill-opacity="0.42"/><rect x="2" y="142.4" width="2" height="1.2" fill="#008000" fill-opacity="0.16"/><rect x="5" y="142.3" width="4" height="1.4" fill="#008000" fill-opacity="0.42"/><rect x="10" y="142.3" width="7" height="1.4" fill="#008000" fill-opacity="0.42"/><rect x="18" y="142.3" width="4" height="1.4" fill="#008000" fill-opacity="0.42"/><rect x="23" y="142.3" width="5" height="1.4" fill="#008000" fill-opacity="0.42"/><rect x="29" y="142.3" width="6" height="1.4" fill="#008000" fill-opacity="0.42"/><rect x="36" y="142.3" width="3" height="1.4" fill="#008000" fill-opacity="0.42"/><rect x="40" y="142.3" width="4" height="1.4" fill="#008000" fill-opacity="0.42"/><rect x="2" y="144.3" width="5" height="1.4" fill="#0000ff" fill-opacity="0.42"/><rect x="8" y="144.3" width="1" height="1.4" fill="#000000" fill-opacity="0.42"/><rect x="9" y="144.3" width="1" height="1.4" fill="#098658" fill-opacity="0.42"/><rect x="10" y="144.3" width="1" height="1.4" fill="#000000" fill-opacity="0.42"/><rect x="12" y="144.3" width="1" height="1.4" fill="#000000" fill-opacity="0.42"/><rect x="4" y="146.4" width="2" height="1.2" fill="#008000" fill-opacity="0.16"/><rect x="7" y="146.3" width="4" height="1.4" fill="#008000" fill-opacity="0.42"/><rect x="12" y="146.3" width="2" height="1.4" fill="#008000" fill-opacity="0.42"/><rect x="15" y="146.3" width="3" height="1.4" fill="#008000" fill-opacity="0.42"/><rect x="19" y="146.3" width="4" height="1.4" fill="#008000" fill-opacity="0.42"/><rect x="24" y="146.3" width="9" height="1.4" fill="#008000" fill-opacity="0.42"/><rect x="34" y="146.3" width="4" height="1.4" fill="#008000" fill-opacity="0.42"/><rect x="39" y="146.3" width="3" height="1.4" fill="#008000" fill-opacity="0.42"/><rect x="43" y="146.3" width="3" height="1.4" fill="#008000" fill-opacity="0.42"/><rect x="47" y="146.3" width="4" height="1.4" fill="#008000" fill-opacity="0.42"/><rect x="52" y="146.3" width="7" height="1.4" fill="#008000" fill-opacity="0.42"/><rect x="60" y="146.3" width="7" height="1.4" fill="#008000" fill-opacity="0.42"/><rect x="67" y="146.3" width="1" height="1.4" fill="#008000" fill-opacity="0.42"/><rect x="4" y="148.4" width="2" height="1.2" fill="#008000" fill-opacity="0.16"/><rect x="7" y="148.3" width="4" height="1.4" fill="#008000" fill-opacity="0.42"/><rect x="12" y="148.3" width="4" height="1.4" fill="#008000" fill-opacity="0.42"/><rect x="17" y="148.3" width="7" height="1.4" fill="#008000" fill-opacity="0.42"/><rect x="25" y="148.3" width="3" height="1.4" fill="#008000" fill-opacity="0.42"/><rect x="29" y="148.3" width="4" height="1.4" fill="#008000" fill-opacity="0.42"/><rect x="34" y="148.3" width="4" height="1.4" fill="#008000" fill-opacity="0.42"/><rect x="39" y="148.3" width="7" height="1.4" fill="#008000" fill-opacity="0.42"/><rect x="47" y="148.3" width="6" height="1.4" fill="#008000" fill-opacity="0.42"/><rect x="54" y="148.3" width="6" height="1.4" fill="#008000" fill-opacity="0.42"/><rect x="61" y="148.3" width="5" height="1.4" fill="#008000" fill-opacity="0.42"/><rect x="67" y="148.3" width="1" height="1.4" fill="#008000" fill-opacity="0.42"/><rect x="69" y="148.3" width="5" height="1.4" fill="#008000" fill-opacity="0.42"/><rect x="4" y="150.4" width="2" height="1.2" fill="#008000" fill-opacity="0.16"/><rect x="7" y="150.3" width="6" height="1.4" fill="#008000" fill-opacity="0.42"/><rect x="14" y="150.3" width="5" height="1.4" fill="#008000" fill-opacity="0.42"/><rect x="20" y="150.3" width="2" height="1.4" fill="#008000" fill-opacity="0.42"/><rect x="23" y="150.3" width="8" height="1.4" fill="#008000" fill-opacity="0.42"/><rect x="32" y="150.3" width="4" height="1.4" fill="#008000" fill-opacity="0.42"/><rect x="37" y="150.3" width="3" height="1.4" fill="#008000" fill-opacity="0.42"/><rect x="41" y="150.3" width="9" height="1.4" fill="#008000" fill-opacity="0.42"/><rect x="50" y="150.3" width="1" height="1.4" fill="#008000" fill-opacity="0.42"/><rect x="4" y="154.4" width="2" height="1.2" fill="#008000" fill-opacity="0.16"/><rect x="7" y="154.8" width="72" height="1" fill="#008000" fill-opacity="0.15"/><rect x="4" y="156.4" width="2" height="1.2" fill="#008000" fill-opacity="0.16"/><rect x="7" y="156.3" width="6" height="1.4" fill="#008000" fill-opacity="0.42"/><rect x="14" y="156.3" width="4" height="1.4" fill="#008000" fill-opacity="0.42"/><rect x="19" y="156.3" width="4" height="1.4" fill="#008000" fill-opacity="0.42"/><rect x="24" y="156.3" width="4" height="1.4" fill="#008000" fill-opacity="0.42"/><rect x="28" y="156.3" width="1" height="1.4" fill="#008000" fill-opacity="0.42"/><rect x="30" y="156.3" width="4" height="1.4" fill="#008000" fill-opacity="0.42"/><rect x="35" y="156.3" width="2" height="1.4" fill="#008000" fill-opacity="0.42"/><rect x="38" y="156.3" width="5" height="1.4" fill="#008000" fill-opacity="0.42"/><rect x="44" y="156.3" width="3" height="1.4" fill="#008000" fill-opacity="0.42"/><rect x="48" y="156.3" width="3" height="1.4" fill="#008000" fill-opacity="0.42"/><rect x="52" y="156.3" width="3" height="1.4" fill="#008000" fill-opacity="0.42"/><rect x="56" y="156.3" width="8" height="1.4" fill="#008000" fill-opacity="0.42"/><rect x="65" y="156.3" width="6" height="1.4" fill="#008000" fill-opacity="0.42"/><rect x="72" y="156.3" width="2" height="1.4" fill="#008000" fill-opacity="0.42"/><rect x="4" y="158.4" width="2" height="1.2" fill="#008000" fill-opacity="0.16"/><rect x="7" y="158.3" width="6" height="1.4" fill="#008000" fill-opacity="0.42"/><rect x="14" y="158.3" width="4" height="1.4" fill="#008000" fill-opacity="0.42"/><rect x="19" y="158.3" width="7" height="1.4" fill="#008000" fill-opacity="0.42"/><rect x="27" y="158.3" width="3" height="1.4" fill="#008000" fill-opacity="0.42"/><rect x="30" y="158.3" width="1" height="1.4" fill="#008000" fill-opacity="0.42"/><rect x="4" y="160.4" width="2" height="1.2" fill="#008000" fill-opacity="0.16"/><rect x="7" y="160.8" width="72" height="1" fill="#008000" fill-opacity="0.15"/><rect x="4" y="164.3" width="4" height="1.4" fill="#000000" fill-opacity="0.42"/><rect x="8" y="164.3" width="1" height="1.4" fill="#000000" fill-opacity="0.42"/><rect x="9" y="164.3" width="2" height="1.4" fill="#098658" fill-opacity="0.42"/><rect x="11" y="164.3" width="1" height="1.4" fill="#000000" fill-opacity="0.42"/><rect x="13" y="164.3" width="4" height="1.4" fill="#000000" fill-opacity="0.42"/><rect x="17" y="164.3" width="1" height="1.4" fill="#000000" fill-opacity="0.42"/><rect x="18" y="164.3" width="1" height="1.4" fill="#000000" fill-opacity="0.42"/><rect x="20" y="164.4" width="2" height="1.2" fill="#008000" fill-opacity="0.16"/><rect x="23" y="164.3" width="5" height="1.4" fill="#008000" fill-opacity="0.42"/><rect x="29" y="164.3" width="3" height="1.4" fill="#008000" fill-opacity="0.42"/><rect x="33" y="164.3" width="4" height="1.4" fill="#008000" fill-opacity="0.42"/><rect x="38" y="164.3" width="3" height="1.4" fill="#008000" fill-opacity="0.42"/><rect x="42" y="164.3" width="1" height="1.4" fill="#008000" fill-opacity="0.42"/><rect x="44" y="164.3" width="5" height="1.4" fill="#008000" fill-opacity="0.42"/><rect x="50" y="164.3" width="6" height="1.4" fill="#008000" fill-opacity="0.42"/><rect x="57" y="164.3" width="2" height="1.4" fill="#008000" fill-opacity="0.42"/><rect x="60" y="164.3" width="4" height="1.4" fill="#008000" fill-opacity="0.42"/><rect x="65" y="164.3" width="2" height="1.4" fill="#008000" fill-opacity="0.42"/><rect x="20" y="166.4" width="2" height="1.2" fill="#008000" fill-opacity="0.16"/><rect x="23" y="166.3" width="7" height="1.4" fill="#008000" fill-opacity="0.42"/><rect x="31" y="166.3" width="6" height="1.4" fill="#008000" fill-opacity="0.42"/><rect x="38" y="166.3" width="9" height="1.4" fill="#008000" fill-opacity="0.42"/><rect x="47" y="166.3" width="1" height="1.4" fill="#008000" fill-opacity="0.42"/><rect x="2" y="168.3" width="1" height="1.4" fill="#000000" fill-opacity="0.42"/><rect x="0" y="170.3" width="1" height="1.4" fill="#000000" fill-opacity="0.42"/><rect x="0" y="174.4" width="2" height="1.2" fill="#008000" fill-opacity="0.16"/><rect x="0" y="176.4" width="2" height="1.2" fill="#008000" fill-opacity="0.16"/><rect x="3" y="176.3" width="4" height="1.4" fill="#008000" fill-opacity="0.42"/><rect x="8" y="176.3" width="4" height="1.4" fill="#008000" fill-opacity="0.42"/><rect x="13" y="176.3" width="3" height="1.4" fill="#008000" fill-opacity="0.42"/><rect x="17" y="176.3" width="2" height="1.4" fill="#008000" fill-opacity="0.42"/><rect x="20" y="176.3" width="3" height="1.4" fill="#008000" fill-opacity="0.42"/><rect x="24" y="176.3" width="11" height="1.4" fill="#008000" fill-opacity="0.42"/><rect x="36" y="176.3" width="9" height="1.4" fill="#008000" fill-opacity="0.42"/><rect x="46" y="176.3" width="3" height="1.4" fill="#008000" fill-opacity="0.42"/><rect x="50" y="176.3" width="9" height="1.4" fill="#008000" fill-opacity="0.42"/><rect x="59" y="176.3" width="1" height="1.4" fill="#008000" fill-opacity="0.42"/><rect x="0" y="178.4" width="2" height="1.2" fill="#008000" fill-opacity="0.16"/><rect x="0" y="180.3" width="3" height="1.4" fill="#0000ff" fill-opacity="0.42"/><rect x="4" y="180.3" width="4" height="1.4" fill="#000000" fill-opacity="0.42"/><rect x="8" y="180.3" width="1" height="1.4" fill="#000000" fill-opacity="0.42"/><rect x="9" y="180.3" width="1" height="1.4" fill="#000000" fill-opacity="0.42"/><rect x="11" y="180.3" width="1" height="1.4" fill="#000000" fill-opacity="0.42"/><rect x="2" y="182.4" width="2" height="1.2" fill="#008000" fill-opacity="0.16"/><rect x="5" y="182.3" width="3" height="1.4" fill="#008000" fill-opacity="0.42"/><rect x="9" y="182.3" width="2" height="1.4" fill="#008000" fill-opacity="0.42"/><rect x="12" y="182.3" width="9" height="1.4" fill="#008000" fill-opacity="0.42"/><rect x="22" y="182.3" width="3" height="1.4" fill="#008000" fill-opacity="0.42"/><rect x="26" y="182.3" width="10" height="1.4" fill="#008000" fill-opacity="0.42"/><rect x="37" y="182.3" width="3" height="1.4" fill="#008000" fill-opacity="0.42"/><rect x="41" y="182.3" width="6" height="1.4" fill="#008000" fill-opacity="0.42"/><rect x="48" y="182.3" width="7" height="1.4" fill="#008000" fill-opacity="0.42"/><rect x="56" y="182.3" width="7" height="1.4" fill="#008000" fill-opacity="0.42"/><rect x="63" y="182.3" width="1" height="1.4" fill="#008000" fill-opacity="0.42"/><rect x="2" y="184.3" width="11" height="1.4" fill="#000000" fill-opacity="0.42"/><rect x="13" y="184.3" width="1" height="1.4" fill="#000000" fill-opacity="0.42"/><rect x="14" y="184.3" width="10" height="1.4" fill="#a35a2a" fill-opacity="0.42"/><rect x="24" y="184.3" width="1" height="1.4" fill="#000000" fill-opacity="0.42"/><rect x="25" y="184.3" width="10" height="1.4" fill="#000000" fill-opacity="0.42"/><rect x="35" y="184.3" width="1" height="1.4" fill="#000000" fill-opacity="0.42"/><rect x="36" y="184.3" width="1" height="1.4" fill="#000000" fill-opacity="0.42"/><rect x="2" y="186.3" width="11" height="1.4" fill="#000000" fill-opacity="0.42"/><rect x="13" y="186.3" width="1" height="1.4" fill="#000000" fill-opacity="0.42"/><rect x="14" y="186.3" width="13" height="1.4" fill="#a35a2a" fill-opacity="0.42"/><rect x="27" y="186.3" width="1" height="1.4" fill="#000000" fill-opacity="0.42"/><rect x="28" y="186.3" width="11" height="1.4" fill="#000000" fill-opacity="0.42"/><rect x="39" y="186.3" width="1" height="1.4" fill="#000000" fill-opacity="0.42"/><rect x="40" y="186.3" width="1" height="1.4" fill="#000000" fill-opacity="0.42"/><rect x="2" y="190.4" width="2" height="1.2" fill="#008000" fill-opacity="0.16"/><rect x="5" y="190.3" width="3" height="1.4" fill="#008000" fill-opacity="0.42"/><rect x="9" y="190.3" width="3" height="1.4" fill="#008000" fill-opacity="0.42"/><rect x="13" y="190.3" width="3" height="1.4" fill="#008000" fill-opacity="0.42"/><rect x="16" y="190.6" width="1" height="1" fill="#008000" fill-opacity="0.14"/><rect x="17" y="190.3" width="10" height="1.4" fill="#008000" fill-opacity="0.42"/><rect x="28" y="190.3" width="8" height="1.4" fill="#008000" fill-opacity="0.42"/><rect x="36" y="190.3" width="1" height="1.4" fill="#008000" fill-opacity="0.42"/><rect x="2" y="192.3" width="9" height="1.4" fill="#000000" fill-opacity="0.42"/><rect x="11" y="192.3" width="1" height="1.4" fill="#000000" fill-opacity="0.42"/><rect x="12" y="192.3" width="1" height="1.4" fill="#000000" fill-opacity="0.42"/><rect x="13" y="192.3" width="1" height="1.4" fill="#000000" fill-opacity="0.42"/><rect x="2" y="196.4" width="2" height="1.2" fill="#008000" fill-opacity="0.16"/><rect x="5" y="196.3" width="7" height="1.4" fill="#008000" fill-opacity="0.42"/><rect x="13" y="196.3" width="4" height="1.4" fill="#008000" fill-opacity="0.42"/><rect x="18" y="196.3" width="4" height="1.4" fill="#008000" fill-opacity="0.42"/><rect x="23" y="196.3" width="7" height="1.4" fill="#008000" fill-opacity="0.42"/><rect x="31" y="196.3" width="4" height="1.4" fill="#008000" fill-opacity="0.42"/><rect x="36" y="196.3" width="2" height="1.4" fill="#008000" fill-opacity="0.42"/><rect x="39" y="196.3" width="8" height="1.4" fill="#008000" fill-opacity="0.42"/><rect x="48" y="196.3" width="4" height="1.4" fill="#008000" fill-opacity="0.42"/><rect x="52" y="196.3" width="1" height="1.4" fill="#008000" fill-opacity="0.42"/><rect x="2" y="198.3" width="5" height="1.4" fill="#0000ff" fill-opacity="0.42"/><rect x="8" y="198.3" width="1" height="1.4" fill="#000000" fill-opacity="0.42"/><rect x="9" y="198.3" width="4" height="1.4" fill="#0000ff" fill-opacity="0.42"/><rect x="13" y="198.3" width="1" height="1.4" fill="#000000" fill-opacity="0.42"/><rect x="15" y="198.3" width="1" height="1.4" fill="#000000" fill-opacity="0.42"/><rect x="4" y="200.3" width="4" height="1.4" fill="#000000" fill-opacity="0.42"/><rect x="8" y="200.3" width="1" height="1.4" fill="#000000" fill-opacity="0.42"/><rect x="9" y="200.3" width="3" height="1.4" fill="#098658" fill-opacity="0.42"/><rect x="12" y="200.3" width="1" height="1.4" fill="#000000" fill-opacity="0.42"/><rect x="14" y="200.3" width="4" height="1.4" fill="#000000" fill-opacity="0.42"/><rect x="18" y="200.3" width="1" height="1.4" fill="#000000" fill-opacity="0.42"/><rect x="19" y="200.3" width="1" height="1.4" fill="#000000" fill-opacity="0.42"/><rect x="2" y="202.3" width="1" height="1.4" fill="#000000" fill-opacity="0.42"/><rect x="0" y="204.3" width="1" height="1.4" fill="#000000" fill-opacity="0.42"/></svg>
  <div class="abs" style="left:702px;top:63px;width:14px;height:406px;background:#fff;border-left:1px solid #ececec"></div>
  <div class="abs" style="left:702px;top:138px;width:14px;height:72px;background:#c1c1c1"></div>
  <div class="abs" style="left:702px;top:188px;width:14px;height:2px;background:#444"></div>
</div></div>

<div id="edshadow"></div>
<div id="panelhdr">
  <div id="collapse"><svg class="abs" style="left:0;top:14px" width="16" height="12" viewBox="0 0 16 12"><path d="M-2.2 2.1 L5.85 10.1 L13.9 2.1" stroke="#111" stroke-width="1.25" fill="none"/></svg></div>
  <div class="ptab" style="left:22px;width:94px;background:#fff;padding-left:14px">Output (9)</div>
  <div class="ptab" style="left:115px;width:113px;border-left:1px solid #c9cacd;padding-left:14px">Problems (0)</div>
  <div class="ptab" style="left:227px;width:120px;border-left:1px solid #c9cacd;padding-left:14px">Terminal (0)</div>
  <svg class="abs" style="left:692px;top:9px" width="16" height="18" viewBox="0 0 16 18">
    <rect x="5" y="0.5" width="6" height="2" fill="#000"/>
    <rect x="0" y="1.6" width="16" height="2.4" fill="#000"/>
    <rect x="1.2" y="3.5" width="13.6" height="14.2" fill="#000"/>
    <rect x="4.2" y="6.6" width="1.6" height="7.8" fill="#e0e1e3"/>
    <rect x="7.2" y="6.6" width="1.7" height="7.8" fill="#e0e1e3"/>
    <rect x="10.2" y="6.6" width="1.6" height="7.8" fill="#e0e1e3"/>
  </svg>
</div>

<div id="output"><div class="abs" style="left:0;top:-502px;width:716px;height:717px">
  <div class="oln" style="top:503px">1</div><div class="ocl" style="top:503px">[info]: Project Path: /Users/maxoffline/Documents/vexcode<i class="hy">-</i>projects/MyProject1</div><div class="oln" style="top:521px">2</div><div class="ocl" style="top:521px">[info]: Updating device configuration...</div><div class="oln" style="top:539px">3</div><div class="ocl" style="top:539px">[info]: Device configuration inserted few comments in the file: src/main.cpp</div><div class="oln" style="top:557px">4</div><div class="ocl" style="top:557px">[info]: Saving Files <i class="hy">-</i> include/robot<i class="hy">-</i>config.h, src/robot<i class="hy">-</i>config.cpp</div><div class="oln" style="top:575px">5</div><div class="ocl" style="top:575px">[info]: Saved : include/robot<i class="hy">-</i>config.h, src/robot<i class="hy">-</i>config.cpp</div><div class="oln" style="top:593px">6</div><div class="ocl" style="top:593px">[info]: Updating device configuration...</div><div class="oln" style="top:611px">7</div><div class="ocl" style="top:611px">[info]: Device configuration inserted few comments in the file: src/main.cpp</div><div class="oln" style="top:629px">8</div><div class="ocl" style="top:629px">[info]: Saving Files <i class="hy">-</i> include/robot<i class="hy">-</i>config.h, src/robot<i class="hy">-</i>config.cpp</div><div class="oln" style="top:647px">9</div><div class="ocl" style="top:647px">[info]: Saved : include/robot<i class="hy">-</i>config.h, src/robot<i class="hy">-</i>config.cpp</div><div class="oln cur" style="top:665px">10</div><div class="ocl" style="top:665px"></div>
  <div class="abs" style="left:702px;top:502px;width:14px;height:215px;background:#fff;border-left:1px solid #d0d0d0"></div>
  <div class="abs" style="left:703px;top:663px;width:13px;height:2px;background:#333"></div>
</div></div>

<div id="help">
  <div id="helphdr"><div class="t">Help</div></div>
  <div id="ctabs">
    <div class="ctab" style="left:0;width:126px;background:#f3f3f3;color:#111;padding-left:14px">Command Help</div>
    <div class="ctab" style="left:125px;width:290px;background:#e8e9eb;border-left:1px solid #c9cacd;color:#8a8a8a;padding-left:14px">Command Reference</div>
  </div>
  <div id="msg">The method that you have choosen has multiple references. Please pick one.</div>
  <div id="redbox">
    <div class="btn" style="top:7px">Brain.Screen.pressing()</div>
    <div class="btn" style="top:61px">BUMPER.pressing()</div>
    <div class="btn" style="top:115px">CONTROLLER.BUTTON.pressing()</div>
    <div class="btn" style="top:169px">LIMIT.pressing()</div>
  </div>
</div>
</body></html>
